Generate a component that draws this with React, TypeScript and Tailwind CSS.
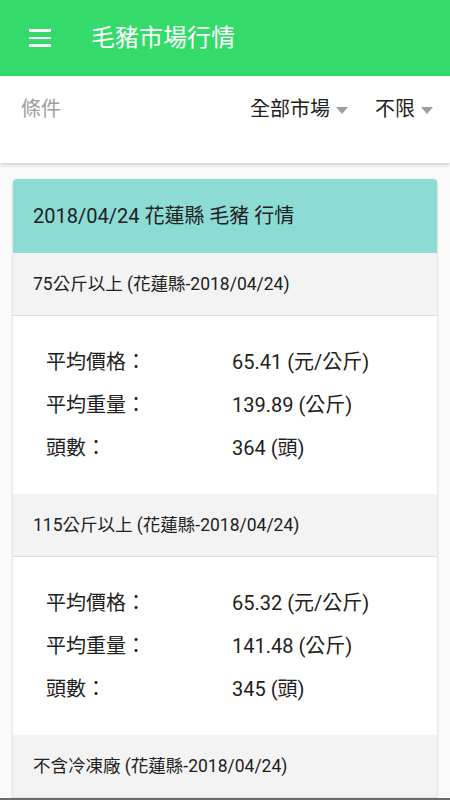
const font = { fontFamily: 'Roboto, "Noto Sans CJK TC", sans-serif' };

const sections = [
  {
    title: "75公斤以上 (花蓮縣-2018/04/24)",
    rows: [
      ["平均價格：", "65.41 (元/公斤)"],
      ["平均重量：", "139.89 (公斤)"],
      ["頭數：", "364 (頭)"],
    ],
  },
  {
    title: "115公斤以上 (花蓮縣-2018/04/24)",
    rows: [
      ["平均價格：", "65.32 (元/公斤)"],
      ["平均重量：", "141.48 (公斤)"],
      ["頭數：", "345 (頭)"],
    ],
  },
  {
    title: "不含冷凍廠 (花蓮縣-2018/04/24)",
    rows: [],
  },
];

const Caret = () => (
  <svg width="12" height="7" viewBox="0 0 12 7" className="ml-[6px] mt-[2px]">
    <polygon points="0,0 12,0 6,7" fill="#9e9e9e" />
  </svg>
);

const App = () => {
  return (
    <div className="flex h-[800px] w-[450px] flex-col overflow-hidden bg-[#fafafa] text-[#212121]" style={font}>
      <div className="flex h-[76px] shrink-0 items-center bg-[#34db6a]">
        <div className="ml-[29px] flex w-[22px] flex-col gap-[5px]">
          <div className="h-[2.5px] bg-white" />
          <div className="h-[2.5px] bg-white" />
          <div className="h-[2.5px] bg-white" />
        </div>
        <h1 className="ml-[40px] text-[24px] leading-none text-white">毛豬市場行情</h1>
      </div>

      <div className="relative z-10 flex h-[87px] shrink-0 items-start bg-white pt-[23px] shadow-[0_2px_4px_rgba(0,0,0,0.18)]">
        <span className="ml-[21px] text-[20px] leading-none text-[#9e9e9e]">條件</span>
        <div className="ml-auto flex items-center">
          <span className="text-[20px] leading-none">全部市場</span>
          <Caret />
        </div>
        <div className="ml-[27px] mr-[17px] flex items-center">
          <span className="text-[20px] leading-none">不限</span>
          <Caret />
        </div>
      </div>

      <div className="mx-[13px] mt-[16px] min-h-0 flex-1 overflow-hidden rounded-t-[3px] bg-white shadow-[0_1px_3px_rgba(0,0,0,0.2)]">
        <div className="flex h-[74px] items-center rounded-t-[3px] bg-[#8ddbd5] pl-[20px] text-[20px]">
          2018/04/24 花蓮縣 毛豬 行情
        </div>
        {sections.map((s) => (
          <div key={s.title}>
            <div className="flex h-[63px] items-center border-b border-[#dddddd] bg-[#f3f3f3] pl-[20px] text-[17.5px]">
              {s.title}
            </div>
            {s.rows.length > 0 && (
              <div className="pt-[24px] pb-[25px] pl-[33px] text-[20px]">
                {s.rows.map(([k, v]) => (
                  <div key={k} className="flex h-[43px] items-center">
                    <span className="w-[186px]">{k}</span>
                    <span>{v}</span>
                  </div>
                ))}
              </div>
            )}
          </div>
        ))}
      </div>
      <div className="h-[2px] shrink-0 bg-[#6b6b6b]" />
    </div>
  );
};

export default App;
